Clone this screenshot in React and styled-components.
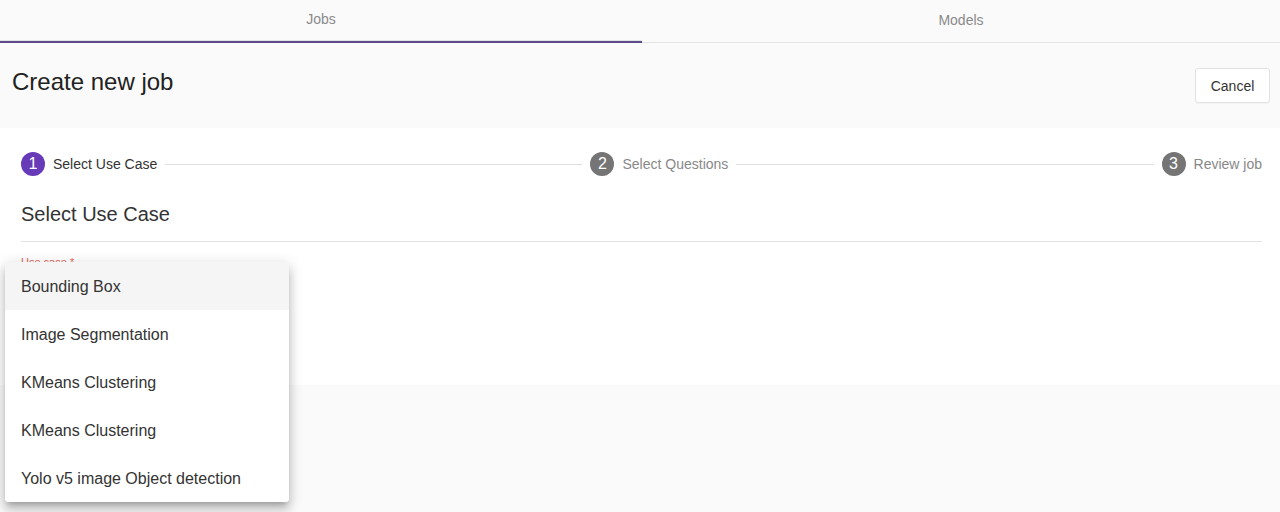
import React from "react";
import styled, { createGlobalStyle } from "styled-components";

const Global = createGlobalStyle`
  html, body { margin: 0; padding: 0; background: #fafafa; }
  body { font-family: "Liberation Sans", Arial, sans-serif; height: 512px; overflow: hidden; }
  * { box-sizing: border-box; }
`;

const Page = styled.div`
  position: relative;
  width: 1280px;
  min-height: 512px;
  background: #fafafa;
`;

const TabBar = styled.div`
  display: flex;
  height: 43px;
`;

const Tab = styled.div`
  flex: ${(p) => (p.$active ? "0 0 642px" : "1")};
  display: flex;
  align-items: center;
  justify-content: center;
  height: 43px;
  font-size: 14px;
  color: #8a8a8a;
  padding-bottom: ${(p) => (p.$active ? "4px" : "3px")};
  border-bottom: ${(p) => (p.$active ? "2px solid #5e4a8c" : "1px solid #e3e3e3")};
  box-shadow: ${(p) => (p.$active ? "inset 0 -1px 0 #e3e3e3" : "none")};
`;

const Header = styled.div`
  display: flex;
  justify-content: space-between;
  align-items: flex-start;
  height: 85px;
  padding: 24px 10px 0 12px;
`;

const Title = styled.h1`
  margin: 0;
  font-size: 24px;
  font-weight: 400;
  color: #222;
  line-height: 30px;
`;

const Button = styled.button`
  margin-top: 1px;
  width: 75px;
  height: 35px;
  background: #fff;
  border: 1px solid #e2e2e2;
  border-radius: 3px;
  font-family: inherit;
  font-size: 14px;
  color: #333;
  box-shadow: 0 1px 1px rgba(0,0,0,0.03);
`;

const Card = styled.div`
  position: relative;
  background: #fff;
  height: 257px;
  padding: 24px 18px 0 21px;
`;

const Stepper = styled.div`
  display: flex;
  align-items: center;
  height: 24px;
`;

const Step = styled.div`
  display: flex;
  align-items: center;
  gap: 8px;
  flex-shrink: 0;
`;

const Circle = styled.div`
  width: 24px;
  height: 24px;
  border-radius: 50%;
  background: ${(p) => (p.$active ? "#673ab7" : "#757575")};
  color: #fff;
  font-size: 16px;
  display: flex;
  align-items: center;
  justify-content: center;
`;

const StepLabel = styled.span`
  font-size: 14px;
  color: ${(p) => (p.$active ? "#333" : "#888")};
`;

const Connector = styled.div`
  flex: 1;
  height: 1px;
  background: #dedede;
  margin: 0 8px;
`;

const SectionTitle = styled.h2`
  margin: 25px 0 0 0;
  font-size: 20px;
  font-weight: 400;
  color: #333;
  line-height: 26px;
`;

const Divider = styled.div`
  height: 1px;
  background: #e2e2e2;
  margin-top: 14px;
`;

const Field = styled.div`
  margin-top: 13px;
`;

const Label = styled.div`
  font-size: 11px;
  color: #e0675c;
  line-height: 14px;
`;

const Menu = styled.ul`
  position: absolute;
  left: 5px;
  top: 134px;
  width: 284px;
  margin: 0;
  padding: 0;
  list-style: none;
  background: #fff;
  border-radius: 4px;
  box-shadow: 0 5px 5px -3px rgba(0,0,0,0.2), 0 8px 10px 1px rgba(0,0,0,0.14), 0 3px 14px 2px rgba(0,0,0,0.12);
  overflow: hidden;
  z-index: 5;
`;

const Item = styled.li`
  height: 48px;
  display: flex;
  align-items: center;
  padding-left: 16px;
  padding-top: 1px;
  font-size: 16px;
  color: #333;
  background: ${(p) => (p.$hover ? "#f5f5f5" : "#fff")};
`;

const options = [
  "Bounding Box",
  "Image Segmentation",
  "KMeans Clustering",
  "KMeans Clustering",
  "Yolo v5 image Object detection",
];

export default function App() {
  return (
    <Page>
      <Global />
      <TabBar>
        <Tab $active>Jobs</Tab>
        <Tab>Models</Tab>
      </TabBar>
      <Header>
        <Title>Create new job</Title>
        <Button>Cancel</Button>
      </Header>
      <Card>
        <Stepper>
          <Step>
            <Circle $active>1</Circle>
            <StepLabel $active>Select Use Case</StepLabel>
          </Step>
          <Connector />
          <Step>
            <Circle>2</Circle>
            <StepLabel>Select Questions</StepLabel>
          </Step>
          <Connector />
          <Step>
            <Circle>3</Circle>
            <StepLabel>Review job</StepLabel>
          </Step>
        </Stepper>
        <SectionTitle>Select Use Case</SectionTitle>
        <Divider />
        <Field>
          <Label>Use case *</Label>
        </Field>
        <Menu>
          {options.map((o, i) => (
            <Item key={i} $hover={i === 0}>{o}</Item>
          ))}
        </Menu>
      </Card>
    </Page>
  );
}
